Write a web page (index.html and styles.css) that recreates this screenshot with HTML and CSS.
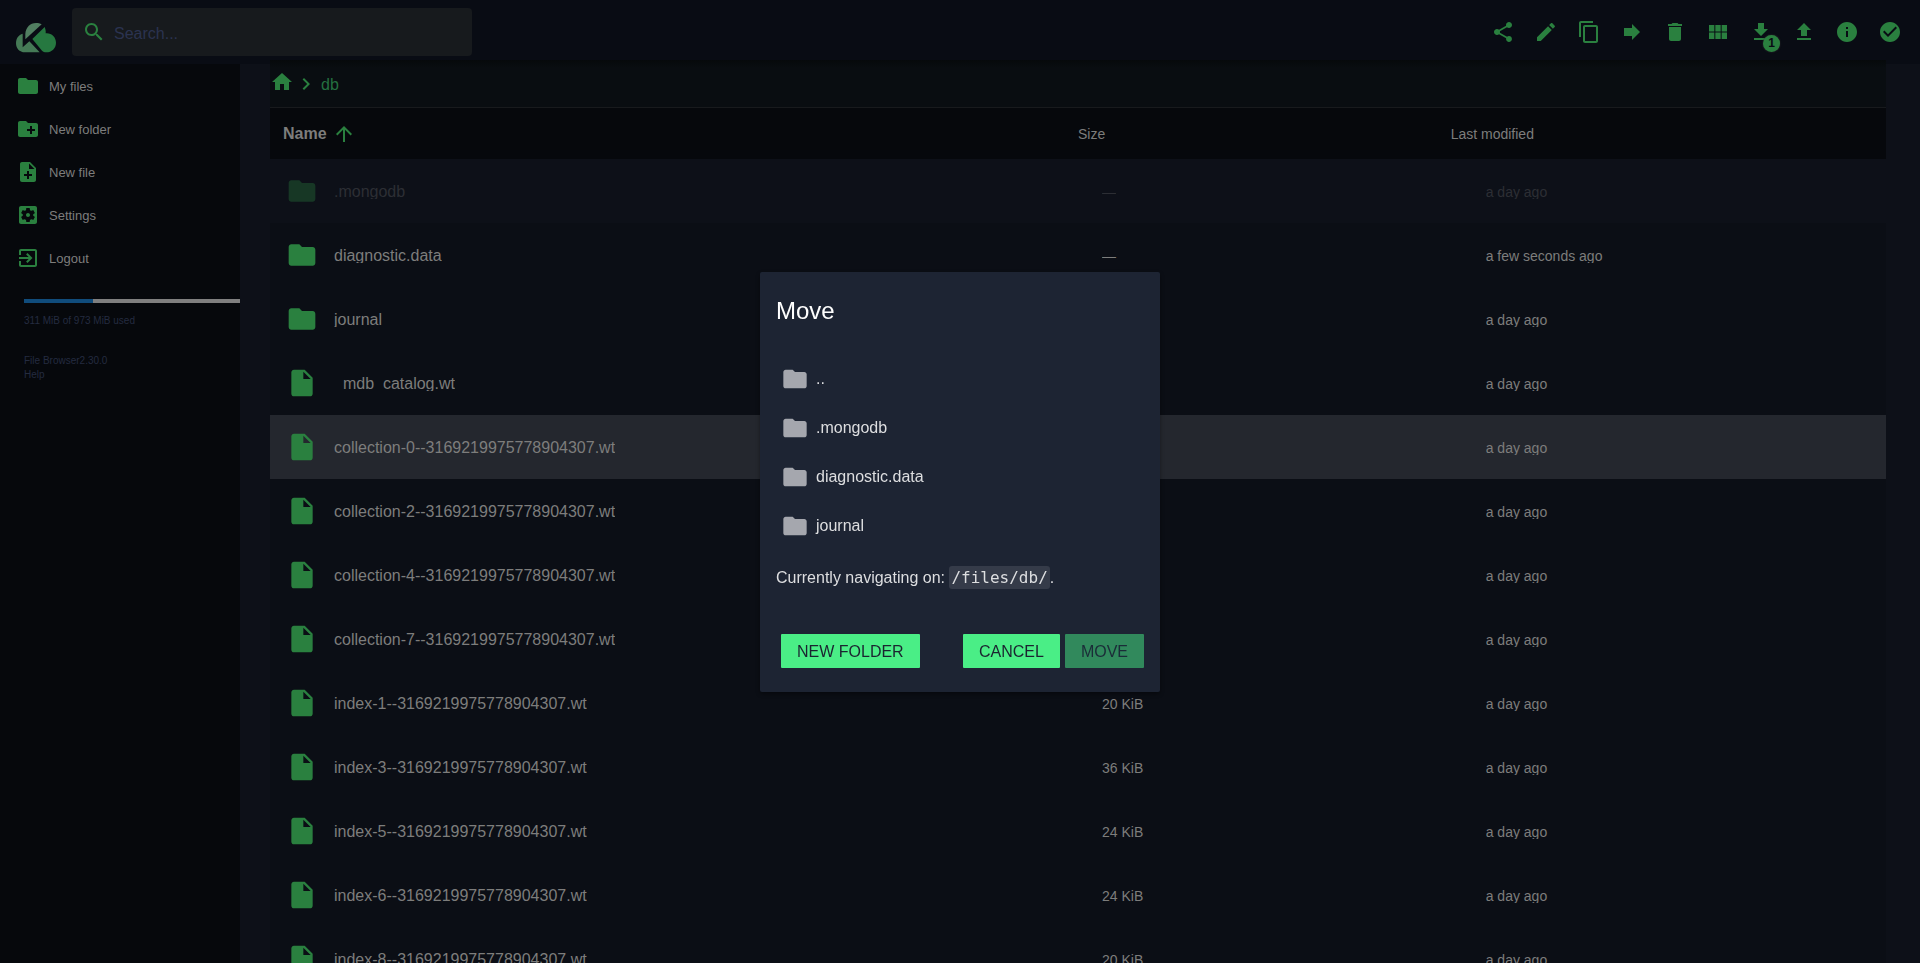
FILE: index.html
```html
<!DOCTYPE html>
<html lang="en">
<head>
<meta charset="utf-8">
<title>db - File Browser</title>
<link rel="stylesheet" href="styles.css">
</head>
<body>
<svg class="sprite" aria-hidden="true">
  <symbol id="folder" viewBox="0 0 24 24"><path d="M10 4H4c-1.100 0-1.990.9-1.990 2L2 18c0 1.100.9 2 2 2h16c1.100 0 2-.9 2-2V8c0-1.100-.9-2-2-2h-8l-2-2z"/></symbol>
  <symbol id="file" viewBox="0 0 24 24"><path d="M6 2c-1.100 0-1.990.9-1.990 2L4 20c0 1.100.89 2 1.990 2H18c1.100 0 2-.9 2-2V8l-6-6H6zm7 7V3.500L18.500 9H13z"/></symbol>
</svg>

<header class="topbar">
  <svg class="logo" viewBox="0 0 120 90" role="img" aria-label="Logo">
    <path fill="#457a56" d="M20 32v41l20-18 31 33H27C10 88 0 76 0 60c0-14 8-25 20-28z"/>
    <path fill="#517f61" d="M28 49V32C29 14 42 0 60 0c7 0 12 1 17 4z"/>
    <path fill="#267840" d="M86 12c2 6 4 12 3 19 17-2 31 11 31 28 0 17-13 29-29 29-6 0-9-2-13-5L49 48z"/>
  </svg>
  <label class="search">
    <svg class="icon" viewBox="0 0 24 24"><path d="M15.500 14h-.79l-.28-.27C15.410 12.590 16 11.110 16 9.500 16 5.910 13.090 3 9.500 3S3 5.910 3 9.500 5.910 16 9.500 16c1.610 0 3.090-.59 4.230-1.570l.27.28v.79l5 4.990L20.490 19l-4.990-5zm-6 0C7.010 14 5 11.990 5 9.500S7.010 5 9.500 5 14 7.010 14 9.500 11.990 14 9.500 14z"/></svg>
    <input type="text" placeholder="Search..." aria-label="Search">
  </label>
  <div class="actions">
    <button aria-label="Share"><svg class="icon" viewBox="0 0 24 24"><path d="M18 16.080c-.76 0-1.440.3-1.960.77L8.910 12.700c.05-.23.09-.46.09-.7s-.04-.47-.09-.7l7.050-4.110c.54.5 1.250.81 2.040.81 1.660 0 3-1.340 3-3s-1.340-3-3-3-3 1.340-3 3c0 .24.04.47.09.7L8.040 9.810C7.500 9.310 6.790 9 6 9c-1.660 0-3 1.340-3 3s1.340 3 3 3c.79 0 1.500-.31 2.040-.81l7.120 4.160c-.05.21-.08.43-.08.65 0 1.610 1.310 2.920 2.920 2.920s2.920-1.310 2.920-2.920-1.310-2.920-2.920-2.920z"/></svg></button>
    <button aria-label="Rename"><svg class="icon" viewBox="0 0 24 24"><path d="M3 17.250V21h3.750L17.810 9.940l-3.750-3.750L3 17.250zM20.710 7.040c.39-.39.39-1.020 0-1.410l-2.340-2.340c-.39-.39-1.020-.39-1.410 0l-1.830 1.830 3.750 3.750 1.830-1.830z"/></svg></button>
    <button aria-label="Copy file"><svg class="icon" viewBox="0 0 24 24"><path d="M16 1H4c-1.100 0-2 .9-2 2v14h2V3h12V1zm3 4H8c-1.100 0-2 .9-2 2v14c0 1.100.9 2 2 2h11c1.100 0 2-.9 2-2V7c0-1.100-.9-2-2-2zm0 16H8V7h11v14z"/></svg></button>
    <button aria-label="Move file"><svg class="icon" viewBox="0 0 24 24"><path d="M12 8V4l8 8-8 8v-4H4V8z"/></svg></button>
    <button aria-label="Delete"><svg class="icon" viewBox="0 0 24 24"><path d="M6 19c0 1.100.9 2 2 2h8c1.100 0 2-.9 2-2V7H6v12zM19 4h-3.500l-1-1h-5l-1 1H5v2h14V4z"/></svg></button>
    <button aria-label="Switch view"><svg class="icon" viewBox="0 0 24 24"><path d="M14.670 5v6.500H9.330V5h5.340zm1 6.500H21V5h-5.330v6.500zm-1 7.500v-6.500H9.330V19h5.340zm1-6.500V19H21v-6.500h-5.330zm-7.340 0H3V19h5.330v-6.500zm0-1V5H3v6.500h5.330z"/></svg></button>
    <button aria-label="Download"><svg class="icon" viewBox="0 0 24 24"><path d="M19 9h-4V3H9v6H5l7 7 7-7zM5 18v2h14v-2H5z"/></svg><span class="badge">1</span></button>
    <button aria-label="Upload"><svg class="icon" viewBox="0 0 24 24"><path d="M9 16h6v-6h4l-7-7-7 7h4zm-4 2h14v2H5z"/></svg></button>
    <button aria-label="Info"><svg class="icon" viewBox="0 0 24 24"><path d="M12 2C6.480 2 2 6.480 2 12s4.480 10 10 10 10-4.480 10-10S17.520 2 12 2zm1 15h-2v-6h2v6zm0-8h-2V7h2v2z"/></svg></button>
    <button aria-label="Select multiple"><svg class="icon" viewBox="0 0 24 24"><path d="M12 2C6.480 2 2 6.480 2 12s4.480 10 10 10 10-4.480 10-10S17.520 2 12 2zm-2 15l-5-5 1.410-1.410L10 14.170l7.590-7.590L19 8l-9 9z"/></svg></button>
  </div>
</header>

<div class="layout">
  <nav class="sidebar">
    <button><svg class="icon"><use href="#folder"/></svg><span>My files</span></button>
    <button><svg class="icon" viewBox="0 0 24 24"><path d="M20 6h-8l-2-2H4c-1.110 0-1.990.89-1.990 2L2 18c0 1.110.89 2 2 2h16c1.110 0 2-.89 2-2V8c0-1.110-.89-2-2-2zm-1 8h-3v3h-2v-3h-3v-2h3V9h2v3h3v2z"/></svg><span>New folder</span></button>
    <button><svg class="icon" viewBox="0 0 24 24"><path d="M14 2H6c-1.100 0-1.990.9-1.990 2L4 20c0 1.100.89 2 1.990 2H18c1.100 0 2-.9 2-2V8l-6-6zm2 14h-3v3h-2v-3H8v-2h3v-3h2v3h3v2zm-3-7V3.500L18.500 9H13z"/></svg><span>New file</span></button>
    <button><svg class="icon" viewBox="0 0 24 24"><path d="M12 10c-1.100 0-2 .9-2 2s.9 2 2 2 2-.9 2-2-.9-2-2-2zm7-7H5c-1.110 0-2 .9-2 2v14c0 1.100.89 2 2 2h14c1.110 0 2-.9 2-2V5c0-1.100-.89-2-2-2zm-1.750 9c0 .23-.02.46-.05.68l1.480 1.160c.13.11.17.3.08.45l-1.400 2.420c-.09.15-.27.21-.43.15l-1.740-.7c-.36.28-.76.51-1.180.69l-.26 1.850c-.03.17-.18.3-.35.3h-2.800c-.17 0-.32-.13-.35-.29l-.26-1.850c-.43-.18-.82-.41-1.180-.69l-1.740.7c-.16.06-.34 0-.43-.15l-1.400-2.420c-.09-.15-.05-.34.08-.45l1.480-1.160c-.03-.23-.05-.46-.05-.69 0-.23.02-.46.05-.68l-1.480-1.160c-.13-.11-.17-.3-.08-.45l1.400-2.420c.09-.15.27-.21.43-.15l1.740.7c.36-.28.76-.51 1.180-.69l.26-1.850c.03-.17.18-.3.35-.3h2.800c.17 0 .32.13.35.29l.26 1.850c.43.18.82.41 1.180.69l1.740-.7c.16-.06.34 0 .43.15l1.400 2.420c.09.15.05.34-.08.45l-1.480 1.160c.03.23.05.46.05.69z"/></svg><span>Settings</span></button>
    <button><svg class="icon" viewBox="0 0 24 24"><path d="M10.090 15.590L11.500 17l5-5-5-5-1.410 1.410L12.670 11H3v2h9.670l-2.580 2.590zM19 3H5c-1.110 0-2 .9-2 2v4h2V5h14v14H5v-4H3v4c0 1.100.89 2 2 2h14c1.100 0 2-.9 2-2V5c0-1.100-.9-2-2-2z"/></svg><span>Logout</span></button>
    <div class="usage">
      <div class="meter"><div class="meter-fill" style="width: 32%"></div></div>
      <p>311 MiB of 973 MiB used</p>
    </div>
    <div class="credits">
      <p><a href="#">File Browser</a>2.30.0</p>
      <p><a href="#">Help</a></p>
    </div>
  </nav>

  <main class="content">
    <div class="breadcrumbs">
      <a href="#" aria-label="Home"><svg class="icon" viewBox="0 0 24 24"><path d="M10 20v-6h4v6h5v-8h3L12 3 2 12h3v8z"/></svg></a>
      <svg class="icon chevron" viewBox="0 0 24 24"><path d="M10 6L8.590 7.410 13.170 12l-4.580 4.590L10 18l6-6z"/></svg>
      <a href="#" class="crumb">db</a>
    </div>
    <table class="listing">
      <colgroup><col class="col-name"><col class="col-size"><col></colgroup>
      <thead>
        <tr>
          <th class="sorted"><button>Name<svg class="icon" viewBox="0 0 24 24"><path d="M4 12l1.410 1.410L11 7.830V20h2V7.830l5.580 5.590L20 12l-8-8-8 8z"/></svg></button></th>
          <th><button>Size</button></th>
          <th><button>Last modified</button></th>
        </tr>
      </thead>
      <tbody>
        <tr class="hidden-file"><td><div class="entry"><svg class="icon"><use href="#folder"/></svg><span class="name">.mongodb</span></div></td><td><span class="detail">—</span></td><td><span class="detail">a day ago</span></td></tr>
        <tr><td><div class="entry"><svg class="icon"><use href="#folder"/></svg><span class="name">diagnostic.data</span></div></td><td><span class="detail">—</span></td><td><span class="detail">a few seconds ago</span></td></tr>
        <tr><td><div class="entry"><svg class="icon"><use href="#folder"/></svg><span class="name">journal</span></div></td><td><span class="detail">—</span></td><td><span class="detail">a day ago</span></td></tr>
        <tr><td><div class="entry"><svg class="icon"><use href="#file"/></svg><span class="name">_mdb_catalog.wt</span></div></td><td><span class="detail">36 KiB</span></td><td><span class="detail">a day ago</span></td></tr>
        <tr class="selected"><td><div class="entry"><svg class="icon"><use href="#file"/></svg><span class="name">collection-0--3169219975778904307.wt</span></div></td><td><span class="detail">20 KiB</span></td><td><span class="detail">a day ago</span></td></tr>
        <tr><td><div class="entry"><svg class="icon"><use href="#file"/></svg><span class="name">collection-2--3169219975778904307.wt</span></div></td><td><span class="detail">36 KiB</span></td><td><span class="detail">a day ago</span></td></tr>
        <tr><td><div class="entry"><svg class="icon"><use href="#file"/></svg><span class="name">collection-4--3169219975778904307.wt</span></div></td><td><span class="detail">24 KiB</span></td><td><span class="detail">a day ago</span></td></tr>
        <tr><td><div class="entry"><svg class="icon"><use href="#file"/></svg><span class="name">collection-7--3169219975778904307.wt</span></div></td><td><span class="detail">20 KiB</span></td><td><span class="detail">a day ago</span></td></tr>
        <tr><td><div class="entry"><svg class="icon"><use href="#file"/></svg><span class="name">index-1--3169219975778904307.wt</span></div></td><td><span class="detail">20 KiB</span></td><td><span class="detail">a day ago</span></td></tr>
        <tr><td><div class="entry"><svg class="icon"><use href="#file"/></svg><span class="name">index-3--3169219975778904307.wt</span></div></td><td><span class="detail">36 KiB</span></td><td><span class="detail">a day ago</span></td></tr>
        <tr><td><div class="entry"><svg class="icon"><use href="#file"/></svg><span class="name">index-5--3169219975778904307.wt</span></div></td><td><span class="detail">24 KiB</span></td><td><span class="detail">a day ago</span></td></tr>
        <tr><td><div class="entry"><svg class="icon"><use href="#file"/></svg><span class="name">index-6--3169219975778904307.wt</span></div></td><td><span class="detail">24 KiB</span></td><td><span class="detail">a day ago</span></td></tr>
        <tr><td><div class="entry"><svg class="icon"><use href="#file"/></svg><span class="name">index-8--3169219975778904307.wt</span></div></td><td><span class="detail">20 KiB</span></td><td><span class="detail">a day ago</span></td></tr>
      </tbody>
    </table>
  </main>
</div>

<div class="modal-layer">
  <section class="dialog" role="dialog" aria-labelledby="dialog-title">
    <h2 id="dialog-title">Move</h2>
    <ul class="folders">
      <li><button><svg class="icon"><use href="#folder"/></svg>..</button></li>
      <li><button><svg class="icon"><use href="#folder"/></svg>.mongodb</button></li>
      <li><button><svg class="icon"><use href="#folder"/></svg>diagnostic.data</button></li>
      <li><button><svg class="icon"><use href="#folder"/></svg>journal</button></li>
    </ul>
    <p class="current">Currently navigating on: <code>/files/db/</code>.</p>
    <div class="dialog-actions">
      <button class="new-folder">NEW FOLDER</button>
      <button>CANCEL</button>
      <button disabled>MOVE</button>
    </div>
  </section>
</div>
</body>
</html>
```

FILE: styles.css
```css
:root {
  --bar: #090c14;
  --page: #0d1018;
  --row: #0b0e15;
  --side: #06080c;
  --green: #2a803f;
  --text: #7d7d7c;
  --muted: #242b40;
}

* { box-sizing: border-box; }

html { overflow: hidden; }

body {
  margin: 0;
  min-height: 100vh;
  background: var(--page);
  color: var(--text);
  font: 16px/18px "Liberation Sans", Arial, sans-serif;
}

button {
  margin: 0;
  padding: 0;
  border: 0;
  background: none;
  color: inherit;
  font: inherit;
  cursor: pointer;
}

p, h2, ul { margin: 0; padding: 0; font-weight: normal; }
a { color: inherit; text-decoration: none; }

.sprite { display: none; }

.icon {
  flex: none;
  display: block;
  width: 24px;
  height: 24px;
  fill: var(--green);
}

/* Top bar */
.topbar {
  display: flex;
  align-items: center;
  height: 60px;
  padding: 4px 9px 0 16px;
  background: var(--bar);
  box-shadow: 0 4px 0 var(--bar);
}

.logo { width: 40px; height: 30px; margin: 12px 16px 0 0; }

.search {
  display: flex;
  align-items: center;
  gap: 8px;
  width: 400px;
  height: 48px;
  padding: 0 10px;
  border-radius: 4px;
  background: #171a1d;
}

.search input {
  flex: 1;
  min-width: 0;
  padding: 4px 0 0;
  border: 0;
  outline: 0;
  background: none;
  color: var(--text);
  font: inherit;
}

.search input::placeholder { color: #2b3350; opacity: 1; }

.actions { display: flex; margin-left: auto; }

.actions button {
  position: relative;
  display: flex;
  justify-content: center;
  width: 43px;
}

.badge {
  position: absolute;
  right: 2px;
  bottom: -8px;
  width: 17px;
  height: 17px;
  border-radius: 50%;
  background: var(--green);
  box-shadow: 0 0 2px #333;
  color: var(--bar);
  font-size: 12px;
  font-weight: bold;
  line-height: 17px;
  text-align: center;
}

/* Page body */
.layout { display: flex; }

.sidebar {
  flex: none;
  width: 240px;
  min-height: calc(100vh - 64px);
  margin-top: 4px;
  background: var(--side);
}

.sidebar button {
  display: flex;
  align-items: center;
  gap: 9px;
  width: 100%;
  height: 43px;
  padding-left: 16px;
  font-size: 13px;
}

.sidebar button span { padding-top: 2px; }

.usage, .credits {
  padding: 20px 0 0 24px;
  color: var(--muted);
  font-size: 10px;
  line-height: 14px;
}

.meter { height: 4px; margin-bottom: 11px; background: #7f7f7f; }
.meter-fill { height: 100%; background: #104c7c; }
.credits { padding-top: 26px; }

.content {
  position: relative;
  flex: 1;
  min-width: 0;
  margin: 0 34px 0 30px;
}

.breadcrumbs {
  display: flex;
  align-items: center;
  height: 48px;
  border-bottom: 1px solid #181a1d;
  background: linear-gradient(#06090b, #090d11 8px);
  color: #247040;
}

.breadcrumbs a:first-child { margin-bottom: 4px; }
.crumb { margin-left: 3px; padding-top: 2px; }

/* Listing */
.listing {
  width: 100%;
  border-collapse: collapse;
  table-layout: fixed;
  background: var(--row);
}

.col-name { width: 50%; }
.col-size { width: 23%; }

.listing th {
  height: 51px;
  padding: 0;
  background: var(--side);
  font-size: 14px;
  font-weight: normal;
  text-align: left;
}

.listing th:last-child { padding-left: 1px; }
.listing th.sorted { padding-left: 13px; font-size: 16px; font-weight: bold; }
.listing th button { display: flex; align-items: center; gap: 5px; }

.listing td { height: 64px; padding: 0; }
.listing td:nth-child(2) { padding-left: 24px; }
.listing td:nth-child(3) { padding-left: 36px; }

.entry {
  display: flex;
  align-items: center;
  gap: 16px;
  padding-left: 16px;
}

.entry .icon { width: 32px; height: 32px; }

.name, .detail {
  display: block;
  overflow: hidden;
  height: 16px;
  line-height: 18px;
  white-space: nowrap;
}

.detail { font-size: 14px; }

.hidden-file { background: var(--page); }
.hidden-file .icon { opacity: .35; }
.hidden-file .name, .hidden-file .detail { opacity: .28; }
.selected { background: #24272e; }

/* Dialog */
.modal-layer {
  position: fixed;
  inset: 0;
  display: flex;
  align-items: center;
  justify-content: center;
}

.dialog {
  width: 400px;
  padding: 24px 16px;
  border-radius: 2px;
  background: #1d2433;
  box-shadow: 0 2px 4px rgba(0, 0, 0, .4);
  color: #dddee0;
}

.dialog h2 { color: #fff; font-size: 24px; line-height: 30px; }

.folders { margin-top: 29px; list-style: none; }

.folders button {
  display: flex;
  align-items: center;
  gap: 7px;
  width: 100%;
  height: 49px;
  padding-left: 5px;
}

.folders .icon { width: 28px; height: 28px; fill: #a5a7ae; }

.current { margin-top: 16px; line-height: 22px; }

.current code {
  padding: 2px;
  border-radius: 3px;
  background: #353b49;
  font: 16px "DejaVu Sans Mono", monospace;
}

.dialog-actions {
  display: flex;
  gap: 5px;
  margin-top: 45px;
}

.dialog-actions button {
  height: 34px;
  padding: 3px 16px 0;
  border-radius: 1px;
  background: #4aee86;
  color: #1b2430;
}

.dialog-actions .new-folder { margin: 0 auto 0 5px; }
.dialog-actions button:disabled { background: #31895c; color: #1b2c38; }
```
